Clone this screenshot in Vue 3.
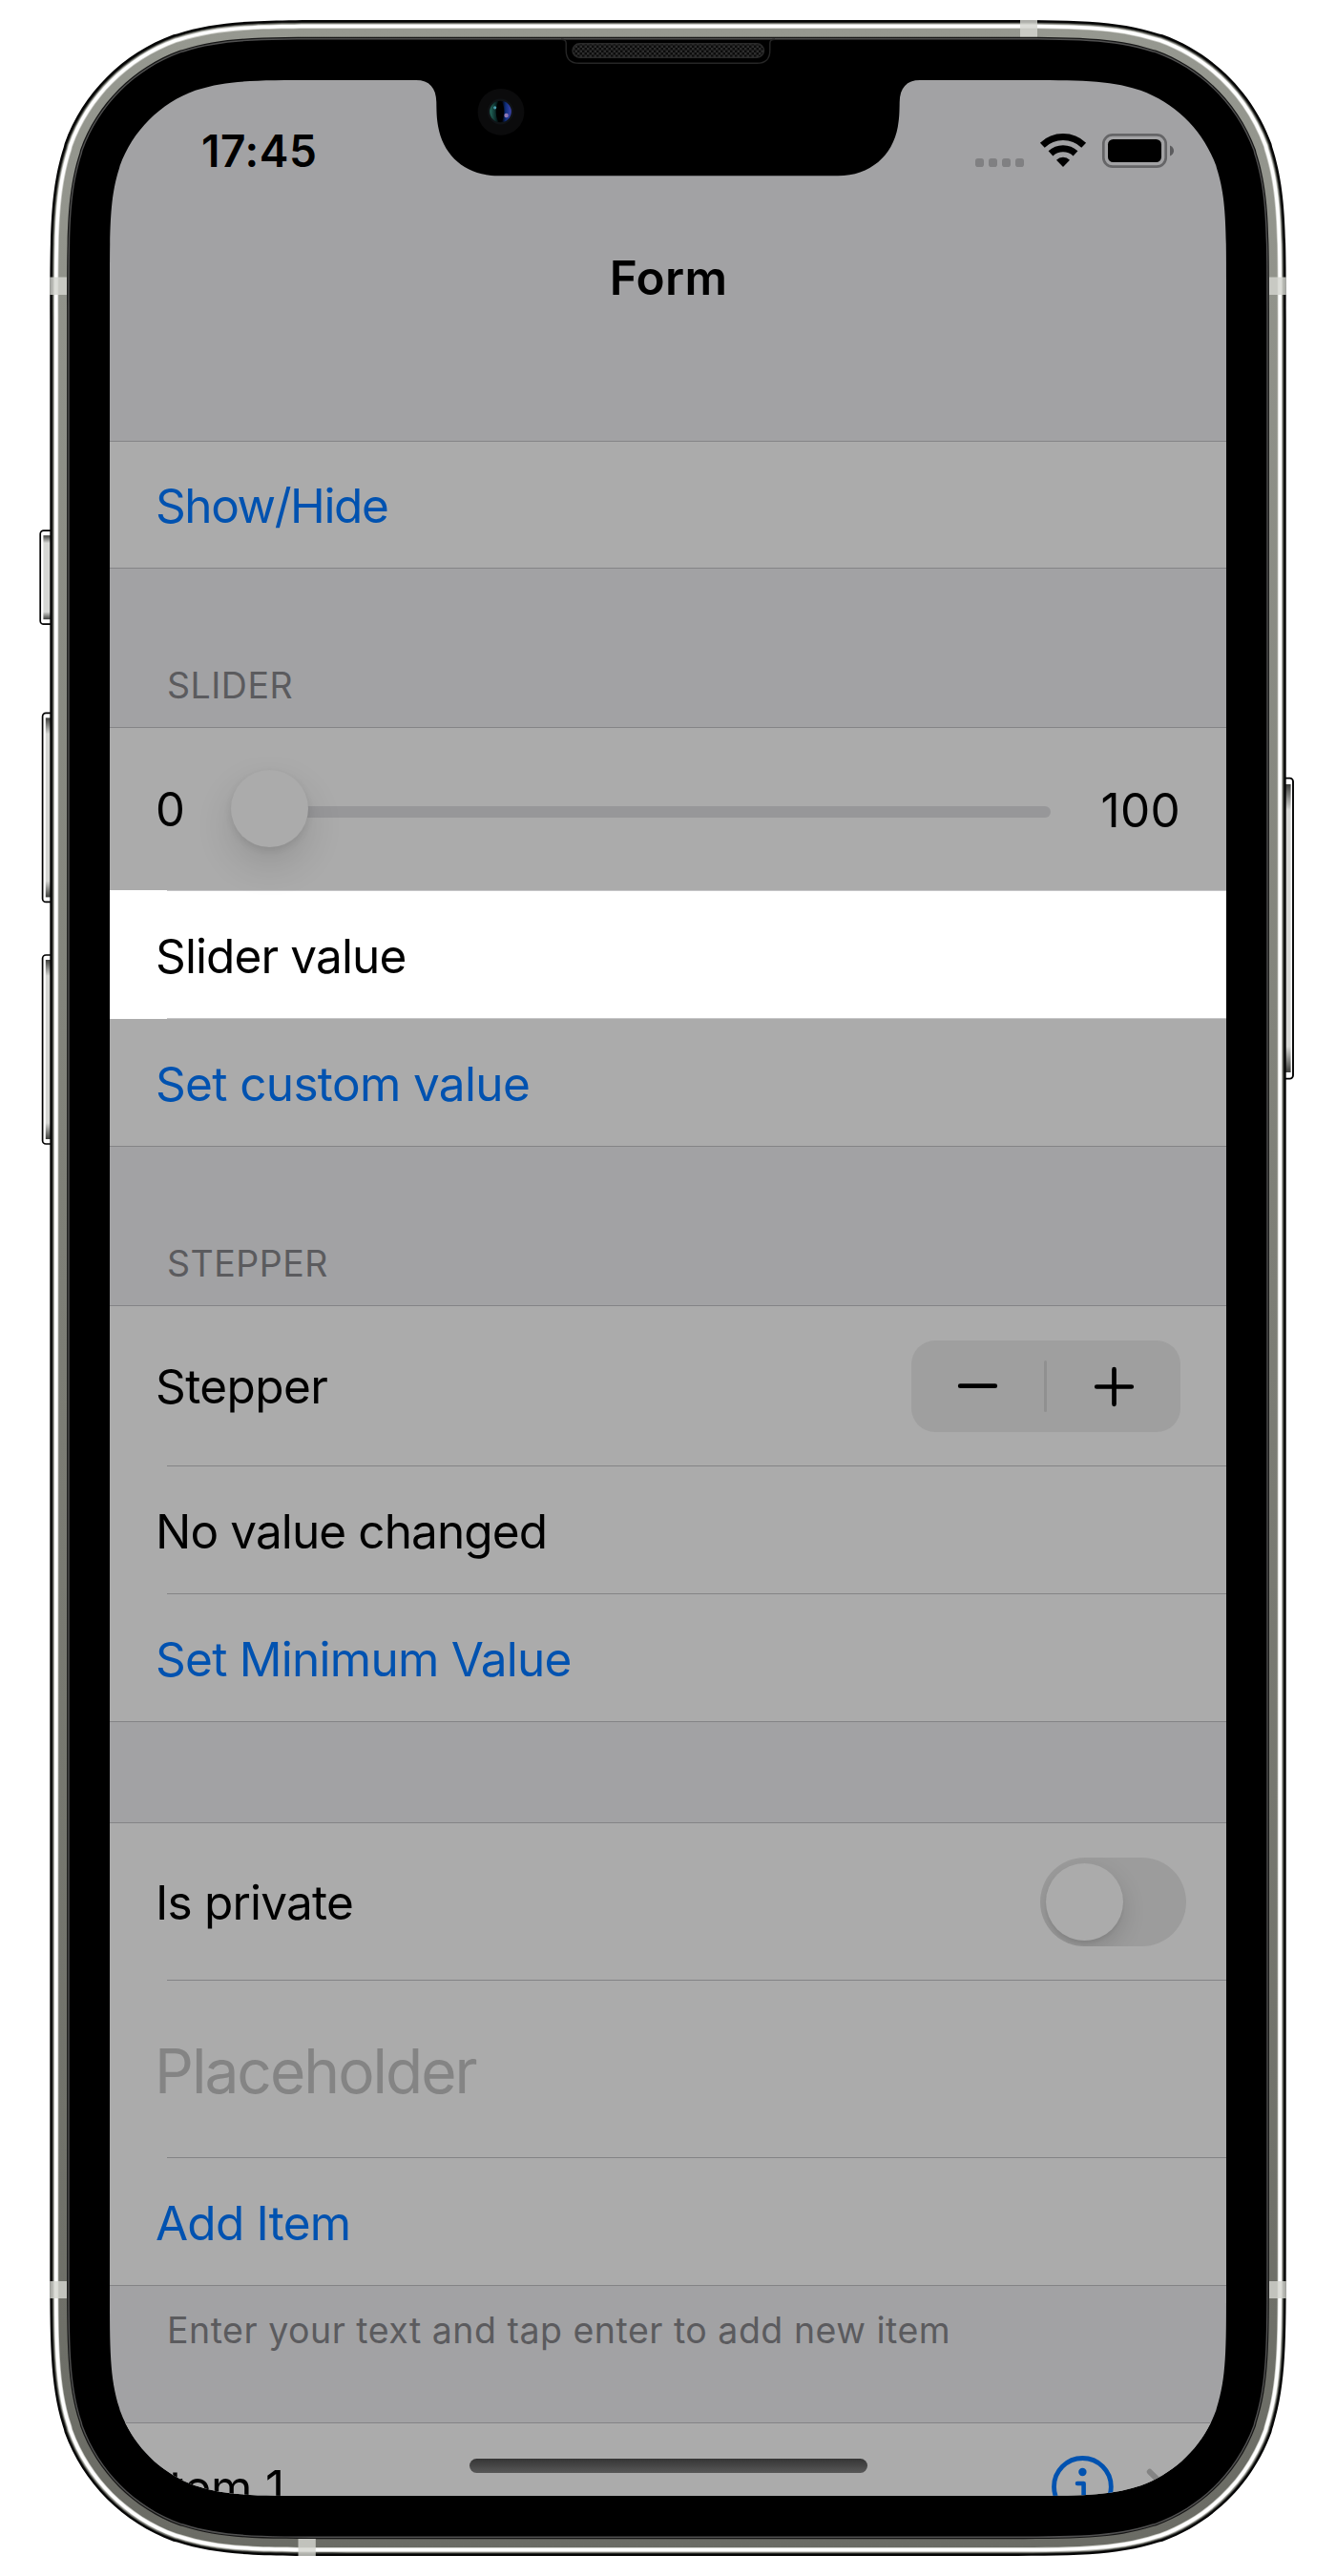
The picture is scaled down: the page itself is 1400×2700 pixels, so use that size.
<script setup>
// Continuous-curvature rounded rectangle
function squircle(x, y, w, h, r) {
  const R = x + w
  const B = y + h
  const n = (v) => Math.round(v * 100) / 100
  const p = (a, b) => `${n(a)} ${n(b)}`
  const [e, c1, c2, k, kk, j, jj, m, mm] = [1.52866, 1.08849, 0.86841, 0.65, 0.0705, 0.63149, 0.07491, 0.37282, 0.16906].map((v) => v * r)
  return [
    `M${p(x + e, y)}L${p(R - e, y)}`,
    `C${p(R - c1, y)} ${p(R - c2, y)} ${p(R - k, y + kk)}L${p(R - j, y + jj)}`,
    `C${p(R - m, y + mm)} ${p(R - mm, y + m)} ${p(R - jj, y + j)}L${p(R - kk, y + k)}`,
    `C${p(R, y + c2)} ${p(R, y + c1)} ${p(R, y + e)}L${p(R, B - e)}`,
    `C${p(R, B - c1)} ${p(R, B - c2)} ${p(R - kk, B - k)}L${p(R - jj, B - j)}`,
    `C${p(R - mm, B - m)} ${p(R - m, B - mm)} ${p(R - j, B - jj)}L${p(R - k, B - kk)}`,
    `C${p(R - c2, B)} ${p(R - c1, B)} ${p(R - e, B)}L${p(x + e, B)}`,
    `C${p(x + c1, B)} ${p(x + c2, B)} ${p(x + k, B - kk)}L${p(x + j, B - jj)}`,
    `C${p(x + m, B - mm)} ${p(x + mm, B - m)} ${p(x + jj, B - j)}L${p(x + kk, B - k)}`,
    `C${p(x, B - c2)} ${p(x, B - c1)} ${p(x, B - e)}L${p(x, y + e)}`,
    `C${p(x, y + c1)} ${p(x, y + c2)} ${p(x + kk, y + k)}L${p(x + jj, y + j)}`,
    `C${p(x + mm, y + m)} ${p(x + m, y + mm)} ${p(x + j, y + jj)}L${p(x + k, y + kk)}`,
    `C${p(x + c2, y)} ${p(x + c1, y)} ${p(x + e, y)}Z`,
  ].join('')
}

const rings = [
  [0, '#050505'],
  [2.2, '#30322f'],
  [3.1, '#777872'],
  [3.9, '#bdbeb8'],
  [4.7, '#ffffff'],
  [8.2, '#c9cac4'],
  [9, 'url(#steel)'],
  [17.8, '#161616'],
  [19, '#505050'],
  [20.4, '#000000'],
].map(([o, fill]) => ({
  fill,
  d: squircle(52.3 + o, 21 + o, 1295.4 - 2 * o, 2658 - 2 * o, 205 - o),
}))

const screenClip = { clipPath: `path('${squircle(0, 0, 1170, 2532, 142)}')` }

const bands = [
  [52.3, 290.5, 17.7, 18.5],
  [1330, 290.5, 17.7, 18.5],
  [52.3, 2391, 17.7, 18],
  [1330, 2391, 17.7, 18],
  [1069, 21, 18, 17.5],
  [312.5, 2661, 18.3, 18],
]

const leftKeys = [
  { x: 42.2, y: 556.2, h: 98 },
  { x: 44.6, y: 747.4, h: 198 },
  { x: 44.6, y: 1001, h: 198 },
]
</script>

<template>
  <div class="device">
    <svg class="frame" width="1400" height="2700" viewBox="0 0 1400 2700">
      <defs>
        <linearGradient id="steel" x1="0" y1="0" x2="0" y2="1">
          <stop offset="0" stop-color="#969890" />
          <stop offset="0.5" stop-color="#7d7e76" />
          <stop offset="1" stop-color="#6b6c65" />
        </linearGradient>
        <linearGradient id="key" x1="0" y1="0" x2="0" y2="1">
          <stop offset="0" stop-color="#3c3d3a" />
          <stop offset="0.09" stop-color="#d6d7d4" />
          <stop offset="0.91" stop-color="#d6d7d4" />
          <stop offset="1" stop-color="#3c3d3a" />
        </linearGradient>
        <pattern id="mesh" width="5" height="5" patternUnits="userSpaceOnUse">
          <path d="M0 0h2.500v2.500h-2.500zM2.500 2.500h2.500v2.500h-2.500z" fill="#2e2e2e" />
        </pattern>
        <linearGradient id="lens" x1="0" y1="0" x2="1" y2="0">
          <stop offset="0" stop-color="#256c5e" />
          <stop offset="0.3" stop-color="#082424" />
          <stop offset="0.42" stop-color="#000" />
          <stop offset="0.58" stop-color="#02040c" />
          <stop offset="0.74" stop-color="#0d2e7c" />
          <stop offset="1" stop-color="#3d43ac" />
        </linearGradient>
      </defs>
      <g v-for="k in leftKeys" :key="k.y">
        <rect :x="k.x" :y="k.y" width="24" :height="k.h" rx="3.5" fill="#fff" stroke="#000" stroke-width="1.7" />
        <rect :x="k.x + 3.2" :y="k.y + 5" width="20" :height="k.h - 10" fill="url(#key)" />
      </g>
      <rect x="1336" y="815.6" width="19" height="315" rx="3.5" fill="#fff" stroke="#000" stroke-width="1.9" />
      <rect x="1336" y="822" width="16.6" height="302" fill="url(#key)" />
      <path v-for="(r, i) in rings" :key="i" :d="r.d" :fill="r.fill" />
      <rect v-for="(b, i) in bands" :key="i" :x="b[0]" :y="b[1]" :width="b[2]" :height="b[3]" fill="#d4d5d0" fill-opacity="0.82" />
    </svg>

    <div class="screen" :style="screenClip">
      <div class="status">
        <span class="time">17:45</span>
        <svg class="indicators" width="210" height="40" viewBox="1021 138 210 40">
          <g fill="#808082">
            <rect x="1022" y="166" width="9" height="9" rx="2.8" />
            <rect x="1036" y="166" width="9" height="9" rx="2.8" />
            <rect x="1050" y="166" width="9" height="9" rx="2.8" />
            <rect x="1064" y="166" width="9" height="9" rx="2.8" />
          </g>
          <path d="M1092.3 152.2a31.5 31.5 0 0 1 43.4 0M1101 160.9a19 19 0 0 1 26 0" fill="none" stroke="#000" stroke-width="7" />
          <path d="M1114 175l-7-7.2a9.8 9.8 0 0 1 14 0z" fill="#000" />
          <rect x="1156.3" y="141.3" width="65.4" height="33.4" rx="9.5" fill="none" stroke="#656567" stroke-width="2.7" />
          <rect x="1161" y="146" width="56" height="24" rx="5.5" />
          <path d="M1226 152.5c5.4 2.3 5.4 8.7 0 11z" fill="#5c5c5e" />
        </svg>
      </div>
      <header class="nav">Form</header>

      <section class="group">
        <div class="row link"><span class="t-show">Show/Hide</span></div>
      </section>

      <h2 class="head">SLIDER</h2>
      <section class="group">
        <div class="row slider-row">
          <span class="lo">0</span>
          <div class="slider"><i class="track"></i><i class="thumb"></i></div>
          <span class="hi">100</span>
        </div>
        <div class="lit">
          <div class="sep"></div>
          <div class="row"><span class="t-value">Slider value</span></div>
          <div class="sep"></div>
        </div>
        <div class="row link"><span class="t-custom">Set custom value</span></div>
      </section>

      <h2 class="head">STEPPER</h2>
      <section class="group">
        <div class="row stepper-row">
          <span class="t-stepper">Stepper</span>
          <svg width="282" height="96" viewBox="955 1405 282 96">
            <rect x="955" y="1405" width="282" height="96" rx="25" fill="#9f9f9f" />
            <rect x="1094" y="1426" width="3" height="54" rx="1.5" fill="#909090" />
            <path d="M1006.2 1452.7h36.6M1149.2 1453.5h36.6M1167.5 1435.2v36.6" stroke="#000" stroke-width="4.7" stroke-linecap="round" />
          </svg>
        </div>
        <div class="sep"></div>
        <div class="row"><span class="t-none">No value changed</span></div>
        <div class="sep"></div>
        <div class="row link"><span class="t-min">Set Minimum Value</span></div>
      </section>

      <section class="group spaced">
        <div class="row toggle-row">
          <span class="t-private">Is private</span>
          <div class="toggle"><i class="knob"></i></div>
        </div>
        <div class="sep"></div>
        <div class="row field"><span>Placeholder</span></div>
        <div class="sep"></div>
        <div class="row link"><span class="t-add">Add Item</span></div>
      </section>

      <p class="note">Enter your text and tap enter to add new item</p>

      <section class="group">
        <div class="row item">
          <span>Item 1</span>
          <svg width="150" height="68" viewBox="1100 2572 150 68">
            <g fill="none" stroke="#0052b0" stroke-width="4.8">
              <circle cx="1134.4" cy="2606.4" r="29.9" />
              <path d="M1129 2603h6.6v18M1126 2621.5h17" stroke-width="4.6" stroke-linecap="round" stroke-linejoin="round" />
            </g>
            <circle cx="1134.4" cy="2591" r="4.2" fill="#0052b0" />
            <path d="M1204.8 2590.8l16 15.6-16 15.6" fill="none" stroke="#848484" stroke-width="6" stroke-linecap="round" stroke-linejoin="round" />
          </svg>
        </div>
      </section>
      <div class="home"></div>
    </div>

    <svg class="notch" width="500" height="160" viewBox="450 36 500 160">
      <path d="M436 83.5V84C450 84 457 92 457.3 107C457.5 119 457.6 124 459.2 133C464.5 163 488 184.3 522 184.3H878C912 184.3 935.5 163 940.8 133C942.4 124 942.5 119 942.7 107C943 92 950 84 964 84V83.5z" />
      <path d="M588 41.2q5.200 0 5.200 4v7.500q0 13.600 13.600 13.600h186.400q13.600 0 13.600-13.600v-7.500q0-4 5.200-4" fill="none" stroke="#262626" stroke-width="1.4" />
      <rect x="600" y="45.8" width="200.5" height="14.4" rx="7.2" fill="#0b0b0b" />
      <rect x="600" y="45.8" width="200.5" height="14.4" rx="7.2" fill="url(#mesh)" stroke="#2a2a2a" stroke-width="1.4" />
      <circle cx="525" cy="117.3" r="24.4" fill="#0b0b0c" />
      <circle cx="524.5" cy="117" r="13.5" fill="#101316" />
      <circle cx="524.5" cy="117" r="11.3" fill="url(#lens)" />
      <ellipse cx="524" cy="117" rx="4.3" ry="11" fill="#000" />
      <circle cx="518.7" cy="112.800" r="1.6" fill="#4c9cae" />
      <circle cx="530.6" cy="121" r="2.2" fill="#8f78b4" />
    </svg>
  </div>
</template>

<style>
body {
  margin: 0;
  background: #fff;
}
</style>

<style scoped>
.device {
  position: relative;
  box-sizing: border-box;
  width: 1400px;
  height: 2700px;
  padding: 84px 115px;
  overflow: hidden;
  font-family: Inter, "Liberation Sans", sans-serif;
  color: #000;
}
.frame {
  position: absolute;
  inset: 0;
}
.notch {
  position: absolute;
  left: 450px;
  top: 36px;
  overflow: visible;
}
.screen {
  position: relative;
  width: 1170px;
  height: 2532px;
  overflow: hidden;
  background: #a2a2a4;
  font-size: 49.5px;
  line-height: 60px;
  white-space: nowrap;
}
.status {
  display: flex;
  align-items: center;
  justify-content: space-between;
  height: 148px;
  padding: 0 54px 0 96px;
}
.time {
  font-size: 46px;
  font-weight: 600;
  letter-spacing: 0.6px;
}
.nav {
  height: 118px;
  margin-bottom: 112px;
  padding-left: 1px;
  line-height: 118px;
  text-align: center;
  font-weight: 600;
  letter-spacing: 0.3px;
}
.group {
  border-top: 1px solid #848486;
  border-bottom: 1px solid #848486;
  background: #ababab;
}
.row {
  display: flex;
  align-items: center;
  height: 133px;
  padding: 0 48px;
}
.row > span {
  padding-top: 2px;
}
.group > .row:only-child {
  height: 132px;
}
.link {
  color: #0052b0;
}
.sep {
  height: 1px;
  margin-left: 60px;
  background: #848486;
}
.lit {
  background: #fff;
}
.lit .sep {
  background: #c5c5c7;
}
.head {
  height: 166px;
  margin: 0;
  padding: 100px 0 0 60px;
  box-sizing: border-box;
  font-size: 37.5px;
  line-height: 46px;
  font-weight: 400;
  letter-spacing: 0.5px;
  color: #5b5b5e;
}
.slider-row {
  height: 170px;
}
.lo {
  width: 79px;
  font-size: 49px;
  letter-spacing: -1px;
}
.slider {
  position: relative;
  width: 859px;
  height: 81px;
  margin-bottom: 2px;
}
.track {
  position: absolute;
  left: 4px;
  right: 0;
  top: 38px;
  height: 12px;
  border-radius: 6px;
  background: #979799;
}
.thumb {
  position: absolute;
  left: 0;
  top: 0;
  width: 81px;
  height: 81px;
  border-radius: 50%;
  background: #ababab;
  box-shadow: 0 18px 39px rgba(0, 0, 0, 0.13), 0 3px 8px rgba(0, 0, 0, 0.09);
}
.hi {
  flex: 1;
  text-align: right;
  letter-spacing: 0.3px;
}
.t-show { letter-spacing: -1.42px; }
.t-value { letter-spacing: -0.88px; }
.t-custom { letter-spacing: -0.65px; }
.t-stepper { letter-spacing: -0.58px; }
.t-none { letter-spacing: -0.89px; }
.t-min { letter-spacing: -0.73px; }
.t-private { letter-spacing: -0.8px; }
.t-add { letter-spacing: -0.78px; }
.stepper-row {
  height: 167px;
  justify-content: space-between;
}
.row > .t-stepper {
  padding-top: 0;
}
.spaced {
  margin-top: 105px;
}
.toggle-row {
  height: 164px;
  padding-right: 42px;
  justify-content: space-between;
}
.toggle {
  box-sizing: border-box;
  width: 153px;
  height: 93px;
  padding: 6px;
  border-radius: 47px;
  background: #9c9c9c;
  overflow: hidden;
}
.knob {
  display: block;
  width: 81px;
  height: 81px;
  border-radius: 50%;
  background: #ababab;
  box-shadow: 0 9px 24px rgba(0, 0, 0, 0.15), 0 3px 3px rgba(0, 0, 0, 0.05);
}
.field {
  height: 185px;
  padding: 2px 0 0 47px;
  box-sizing: border-box;
  font-size: 64px;
  letter-spacing: -1.98px;
  color: #848484;
}
.note {
  height: 143px;
  margin: 0;
  padding: 24px 0 0 60px;
  box-sizing: border-box;
  font-size: 37.5px;
  line-height: 46px;
  letter-spacing: 0.5px;
  color: #5b5b5e;
}
.item {
  justify-content: space-between;
  padding-right: 35px;
  letter-spacing: -0.17px;
}
.home {
  position: absolute;
  left: 377px;
  top: 2493px;
  width: 417px;
  height: 15px;
  border-radius: 8px;
  background: linear-gradient(#353535, #585858);
}
</style>
